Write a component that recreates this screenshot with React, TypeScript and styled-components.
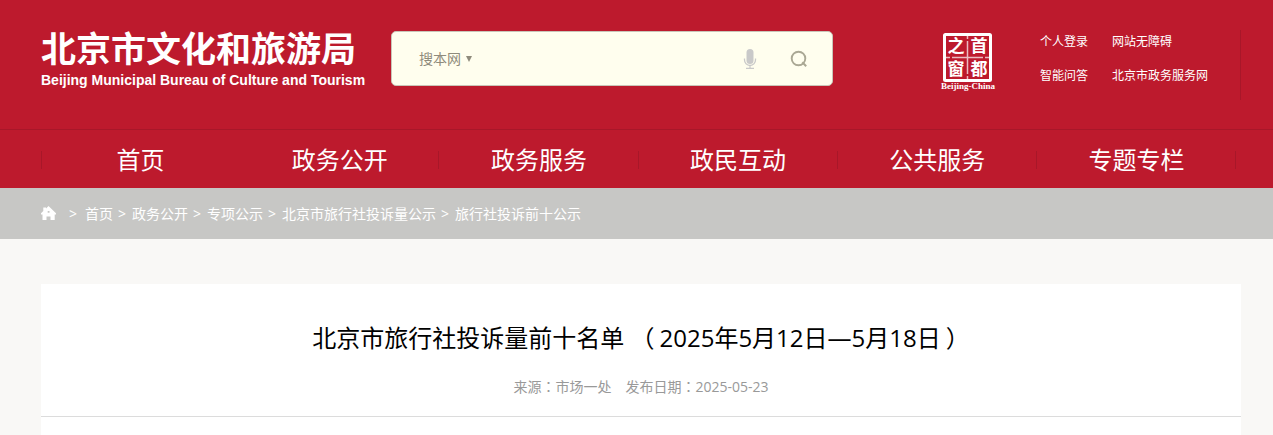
import React from 'react';
import styled, { createGlobalStyle, css } from 'styled-components';

const GlobalStyle = createGlobalStyle`
  * { box-sizing: border-box; }
  body {
    margin: 0;
    background: #f9f8f6;
    font-family: "Open Sans", "Noto Sans CJK SC", sans-serif;
    font-size: 14px;
  }
  a { color: inherit; text-decoration: none; }
  h1, p, ul, ol { margin: 0; padding: 0; font-weight: 400; }
  ul, ol { list-style: none; }
`;

const gutter = css`
  padding-left: 41px;
  padding-right: 32px;
`;

const Header = styled.header`
  background: #bd1a2d;
  color: #fff;
`;

const Top = styled.div`
  ${gutter}
  display: flex;
  align-items: flex-start;
  padding-top: 30px;
  height: 129px;
`;

const Brand = styled.a`
  display: flex;
  flex-direction: column;
  width: 350px;
  flex: none;
  white-space: nowrap;
`;

const BrandName = styled.span`
  font-family: "Noto Sans CJK SC", sans-serif;
  font-size: 35px;
  line-height: 34px;
  font-weight: 700;
`;

const BrandLatin = styled.span`
  margin-top: 4px;
  font-family: "Liberation Sans", sans-serif;
  font-size: 14px;
  line-height: 24px;
  font-weight: 700;
`;

const Search = styled.form`
  display: flex;
  align-items: center;
  flex: 0 1 442px;
  height: 55px;
  margin-top: 1px;
  padding: 0 24px 0 27px;
  background: #fffeee;
  border: 1px solid #c9c5b8;
  border-radius: 5px;
`;

const Scope = styled.button`
  display: flex;
  align-items: center;
  gap: 5px;
  padding: 0;
  border: 0;
  background: none;
  color: #8f8b7c;
  font: inherit;
  line-height: 20px;
  white-space: nowrap;
`;

const SearchInput = styled.input`
  flex: 1;
  min-width: 0;
  height: 40px;
  border: 0;
  outline: 0;
  background: transparent;
  font: inherit;
`;

const IconButton = styled.button<{ $gap?: number }>`
  display: flex;
  padding: 0;
  border: 0;
  background: none;
  margin-left: ${({ $gap = 0 }) => $gap}px;
`;

const Seal = styled.a`
  display: block;
  flex: none;
  margin: 2px 0 0 auto;
`;

const Links = styled.ul`
  display: grid;
  grid-template-columns: 72px 128px;
  grid-auto-rows: 34px;
  flex: none;
  height: 70px;
  margin-left: 44px;
  border-right: 1px solid #a81729;
  font-size: 12px;
  line-height: 24px;
  white-space: nowrap;
`;

const Nav = styled.nav`
  border-top: 1px solid #a81729;
  padding: 0 37px 0 41px;
`;

const NavList = styled.ul`
  display: grid;
  grid-template-columns: repeat(6, 1fr);
  height: 58px;
  padding-top: 1px;
  align-items: center;
`;

const NavItem = styled.li<{ $start?: boolean; $end?: boolean }>`
  display: flex;
  align-items: center;
  justify-content: center;
  height: 18px;
  border-left: 1px solid ${({ $start }) => ($start ? '#a81729' : 'transparent')};
  border-right: 1px solid ${({ $end }) => ($end ? '#a81729' : 'transparent')};
  font-size: 24px;
  line-height: 36px;
  white-space: nowrap;
`;

const Crumbs = styled.nav`
  ${gutter}
  display: flex;
  align-items: center;
  height: 51px;
  background: #c7c7c5;
  color: #fff;
`;

const CrumbList = styled.ol`
  display: flex;
  margin-left: 12px;
  padding-bottom: 2px;
  white-space: nowrap;
`;

const Crumb = styled.li`
  &::before {
    content: ">";
    margin: 0 6px 0 5px;
  }
  &:first-child::before {
    margin: 0 8px 0 0;
  }
`;

const Main = styled.main`
  ${gutter}
  padding-top: 45px;
`;

const Article = styled.article`
  background: #fff;
  min-height: 151px;
`;

const ArticleHead = styled.header`
  padding: 36px 0 18px;
  border-bottom: 1px solid #dcdcdc;
  text-align: center;
`;

const Title = styled.h1`
  font-size: 24px;
  line-height: 36px;
  color: #000;
`;

const DateRange = styled.span`
  margin: 0 5px;
`;

const Meta = styled.p`
  display: flex;
  justify-content: center;
  gap: 14px;
  margin-top: 19px;
  font-size: 14px;
  line-height: 22px;
  color: #999;
`;

const Mark = styled.span`
  font-family: "Noto Sans CJK TC", sans-serif;
`;

const navItems = ['首页', '政务公开', '政务服务', '政民互动', '公共服务', '专题专栏'];
const crumbs = ['首页', '政务公开', '专项公示', '北京市旅行社投诉量公示', '旅行社投诉前十公示'];
const links = ['个人登录', '网站无障碍', '智能问答', '北京市政务服务网'];

const MicIcon = () => (
  <svg width="14" height="22" viewBox="0 0 14 22" aria-hidden="true">
    <rect x="3.5" y="1" width="7" height="15" rx="3.5" fill="#c9c9c9" />
    <path d="M1.5 10.5v1.5a5.5 5.5 0 0 0 11 0v-1.5M7 17.5V20M3 20.3h8" fill="none" stroke="#c9c9c9" strokeWidth="1.3" />
  </svg>
);

const SearchIcon = () => (
  <svg width="18" height="18" viewBox="0 0 18 18" aria-hidden="true">
    <circle cx="8.5" cy="8.5" r="6.8" fill="none" stroke="#aaa894" strokeWidth="1.9" />
    <path d="M12.3 12.3l3.9 3.9" stroke="#aaa894" strokeWidth="2" />
  </svg>
);

const HomeIcon = () => (
  <svg width="16" height="16" viewBox="0 0 16 16" aria-hidden="true">
    <path fill="#fff" fillRule="evenodd" d="M7.5 0L15 7.3V8.5h-1.3V14H9.5v-3.5h-4V14H1.5V8.5H0V7.3L2.3 5V1.5H5v.9zM6.7 5v1.8h1.8V5z" />
  </svg>
);

const SealIcon = () => (
  <svg width="56" height="60" viewBox="0 0 56 60" role="img" aria-label="首都之窗">
    <rect x="4.5" y="2.5" width="46" height="46" rx="1" fill="none" stroke="#fff" strokeWidth="3" />
    <path d="M27.5 4v3M27.5 9v33M27.5 44v4M5 25.5h5M12 25.5h31M45 25.5h5" stroke="#fff" strokeOpacity=".7" strokeWidth="1.5" />
    <g fill="#fff" fontFamily="'Noto Sans CJK SC', sans-serif" fontWeight="700" fontSize="17" textAnchor="middle">
      <text x="16" y="20">之</text>
      <text x="39" y="20">首</text>
      <text x="16" y="43">窗</text>
      <text x="39" y="43">都</text>
    </g>
    <text x="28" y="57" fill="#fff" fontFamily="'Liberation Serif', serif" fontWeight="700" fontSize="9" textAnchor="middle">Beijing-China</text>
  </svg>
);

export default function App() {
  return (
    <>
      <GlobalStyle />
      <Header>
        <Top>
          <Brand href="#">
            <BrandName>北京市文化和旅游局</BrandName>
            <BrandLatin>Beijing Municipal Bureau of Culture and Tourism</BrandLatin>
          </Brand>
          <Search onSubmit={(e) => e.preventDefault()}>
            <Scope type="button">
              搜本网
              <svg width="6" height="6" viewBox="0 0 6 6" aria-hidden="true">
                <path d="M0 0h6L3 6z" fill="#8f8b7c" />
              </svg>
            </Scope>
            <SearchInput type="text" aria-label="搜索" />
            <IconButton type="button" aria-label="语音"><MicIcon /></IconButton>
            <IconButton type="submit" aria-label="搜索" $gap={33}><SearchIcon /></IconButton>
          </Search>
          <Seal href="#"><SealIcon /></Seal>
          <Links>
            {links.map((text) => (
              <li key={text}><a href="#">{text}</a></li>
            ))}
          </Links>
        </Top>
        <Nav aria-label="主导航">
          <NavList>
            {navItems.map((text, i) => (
              <NavItem key={text} $start={i === 0} $end={i > 0}>
                <a href="#">{text}</a>
              </NavItem>
            ))}
          </NavList>
        </Nav>
      </Header>
      <Crumbs aria-label="当前位置">
        <HomeIcon />
        <CrumbList>
          {crumbs.map((text) => (
            <Crumb key={text}><a href="#">{text}</a></Crumb>
          ))}
        </CrumbList>
      </Crumbs>
      <Main>
        <Article>
          <ArticleHead>
            <Title>
              北京市旅行社投诉量前十名单 （<DateRange>2025年5月12日—5月18日</DateRange>）
            </Title>
            <Meta>
              <span>来源<Mark>：</Mark>市场一处</span>
              <span>发布日期<Mark>：</Mark>2025-05-23</span>
            </Meta>
          </ArticleHead>
        </Article>
      </Main>
    </>
  );
}
